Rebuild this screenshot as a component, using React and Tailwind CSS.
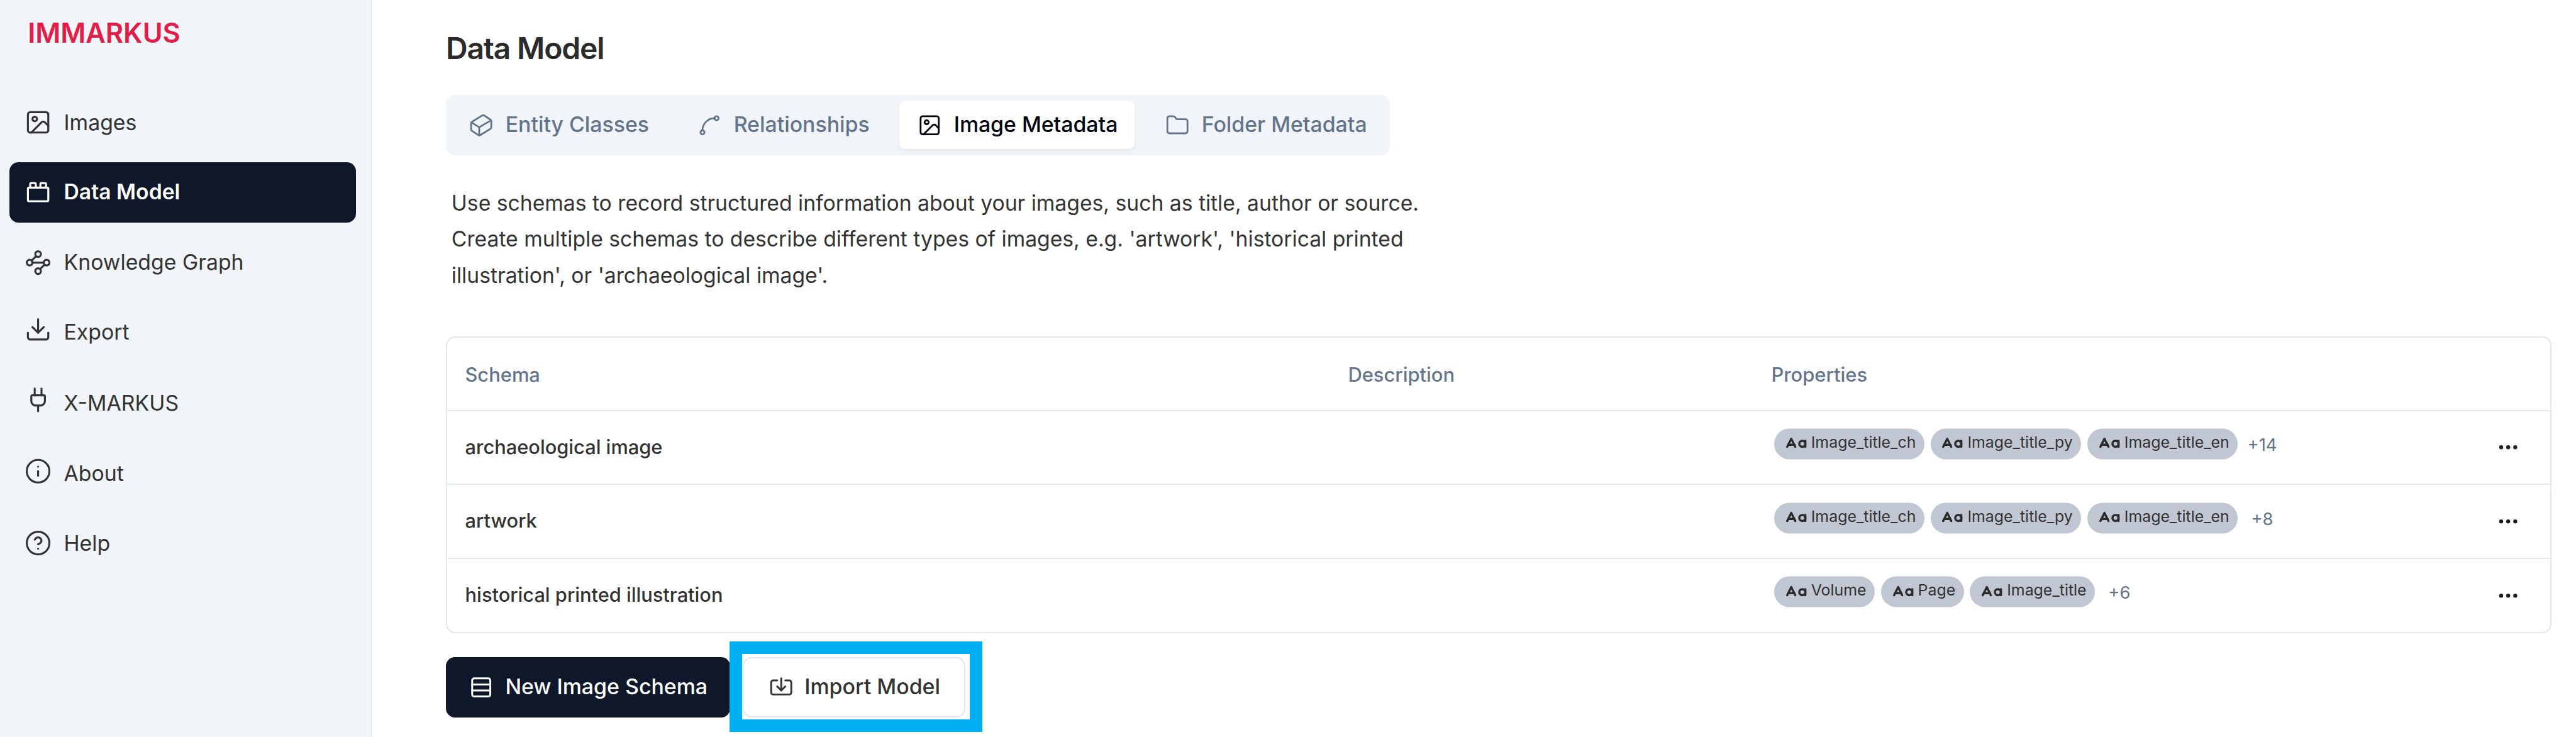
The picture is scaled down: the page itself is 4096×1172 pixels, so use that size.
import {
  Image,
  ToyBrick,
  Waypoints,
  Download,
  Plug,
  Info,
  CircleHelp,
  Cuboid,
  Spline,
  Folder,
  Rows3,
  Import,
  Ellipsis,
} from "lucide-react";

const NAV = [
  { label: "Images", icon: Image, iconShift: "", textShift: "translate-y-[1.4px]" },
  { label: "Data Model", icon: ToyBrick, iconShift: "", textShift: "-translate-y-[1.2px]", active: true },
  { label: "Knowledge Graph", icon: Waypoints, iconShift: "", textShift: "-translate-y-[0.5px]" },
  { label: "Export", icon: Download, iconShift: "-translate-y-[4.9px]", textShift: "-translate-y-[0.6px]" },
  { label: "X-MARKUS", icon: Plug, iconShift: "-translate-y-[4.7px]", textShift: "translate-y-[1px]" },
  { label: "About", icon: Info, iconShift: "-translate-y-[2.3px]", textShift: "translate-y-[1.2px]" },
  { label: "Help", icon: CircleHelp, iconShift: "", textShift: "translate-y-[1.4px]" },
];

const TABS = [
  { label: "Entity Classes", icon: Cuboid, width: "w-[343px]" },
  { label: "Relationships", icon: Spline, width: "w-[330px]" },
  { label: "Image Metadata", icon: Image, width: "w-[374px]", active: true },
  { label: "Folder Metadata", icon: Folder, width: "w-[377px]" },
];

const ROWS = [
  { name: "archaeological image", props: ["Image_title_ch", "Image_title_py", "Image_title_en"], more: "+14" },
  { name: "artwork", props: ["Image_title_ch", "Image_title_py", "Image_title_en"], more: "+8" },
  { name: "historical printed illustration", props: ["Volume", "Page", "Image_title"], more: "+6" },
];

const GRID = "grid grid-cols-[1404px_673px_1fr_auto] items-center";

function TextTypeIcon() {
  return (
    <svg
      viewBox="0 0 24 24"
      fill="none"
      stroke="currentColor"
      strokeWidth="2.2"
      strokeLinecap="round"
      strokeLinejoin="round"
      className="size-[38.4px] shrink-0 text-[#2b2b2b]"
    >
      <path d="m3 15 4-8 4 8" />
      <path d="M4 13h6" />
      <circle cx="18" cy="12" r="3" />
      <path d="M21 9v6" />
    </svg>
  );
}

function Chip({ label }) {
  return (
    <span className="flex h-[49px] items-center gap-[4.6px] rounded-full bg-[#c1c7d2] pr-[13.7px] pl-[15.7px] text-[24.9px] leading-[49px] text-[#333333]">
      <TextTypeIcon />
      <span className="-translate-y-[2.4px]">{label}</span>
    </span>
  );
}

function Sidebar() {
  return (
    <aside className="h-full w-[592px] shrink-0 border-r-2 border-[#e2e8f0] bg-[#f1f5f9] pt-[22px] pr-[24px] pl-[15.3px]">
      <div className="pl-[28.9px] text-[43.4px] leading-[60px] font-semibold text-[#e11d48]">IMMARKUS</div>
      <nav className="mt-[64.5px] flex flex-col gap-[15.5px]">
        {NAV.map(({ label, icon: Icon, iconShift, textShift, active }) => (
          <a
            key={label}
            className={
              active
                ? "flex h-[96px] items-center rounded-[14.4px] bg-[#0f172a] pl-[24px] text-[33.7px] font-semibold text-white"
                : "flex h-[96px] items-center pl-[24px] text-[33.8px] text-[#333333]"
            }
          >
            <Icon strokeWidth={1.75} className={"size-[43.2px] shrink-0 " + iconShift} />
            <span className={"pl-[19px] " + textShift}>{label}</span>
          </a>
        ))}
      </nav>
    </aside>
  );
}

function Tabs() {
  return (
    <div className="mt-[44.6px] flex h-[96px] w-[1501.4px] items-center gap-[20px] rounded-[14.4px] bg-[#f1f5f9] pl-[8px]">
      {TABS.map(({ label, icon: Icon, width, active }) => (
        <button
          key={label}
          className={
            "flex h-[77px] shrink-0 items-center rounded-[9.6px] pl-[28.5px] text-[33.8px] font-medium whitespace-nowrap " +
            width +
            (active ? " bg-white text-[#01040f] shadow-[0_2.4px_4.8px_rgba(0,0,0,0.05)]" : " text-[#64748b]")
          }
        >
          <Icon strokeWidth={1.75} className="size-[38.4px] shrink-0" />
          <span className="translate-y-[0.3px] pl-[19.8px]">{label}</span>
        </button>
      ))}
    </div>
  );
}

function SchemaTable() {
  return (
    <div className="mt-[68.8px] rounded-[14.4px] border-2 border-[#e2e8f0] text-[31px] font-medium">
      <div className={GRID + " h-[114.4px] text-[30.9px] text-[#64748b]"}>
        <span className="translate-y-[0.5px] pl-[28.4px]">Schema</span>
        <span className="translate-y-[0.5px] pl-[28.4px]">Description</span>
        <span className="translate-y-[0.5px] pl-[28.4px]">Properties</span>
      </div>
      {ROWS.map(({ name, props, more }) => (
        <div key={name} className={GRID + " h-[117.6px] border-t-2 border-[#e2e8f0] text-[#333333]"}>
          <span className="-translate-y-[1px] pl-[28.6px] text-[30.8px]">{name}</span>
          <span />
          <div className="flex -translate-y-[5.5px] items-center gap-[9.6px] pl-[33px] font-normal">
            {props.map((p) => (
              <Chip key={p} label={p} />
            ))}
            <span className="-ml-[1px] w-[60px] translate-y-[1.8px] text-center text-[27.5px] leading-[49px] text-[#64748b]">
              {more}
            </span>
          </div>
          <span className="pr-[47px]">
            <Ellipsis className="size-[38.4px] text-[#1f1f1f]" />
          </span>
        </div>
      ))}
    </div>
  );
}

function Actions() {
  return (
    <div className="mt-[38.8px] flex h-[96px] gap-[20px] text-[33.9px] font-medium whitespace-nowrap">
      <button className="flex w-[452px] items-center rounded-[14.4px] bg-[#0f172a] pl-[37px] text-white">
        <Rows3 strokeWidth={1.85} className="size-[38.4px] shrink-0" />
        <span className="-translate-y-[1.2px] pl-[19px]">New Image Schema</span>
      </button>
      <div className="relative">
        <button className="flex h-full w-[354px] items-center rounded-[14.4px] border-2 border-[#e2e8f0] bg-white pl-[39.7px] text-[#333333]">
          <Import strokeWidth={1.85} className="size-[38.4px] shrink-0" />
          <span className="-translate-y-[1.2px] pl-[18.2px]">Import Model</span>
        </button>
        <div className="pointer-events-none absolute -top-[25px] -left-[21px] h-[143.5px] w-[402px] border-[20px] border-[#00b0f0]" />
      </div>
    </div>
  );
}

export default function App() {
  return (
    <div className="flex h-[1172px] w-[4096px] overflow-hidden bg-white font-[Inter,sans-serif]">
      <Sidebar />
      <main className="flex-1 pt-[46.2px] pr-[39.5px] pl-[117px]">
        <h1 className="translate-y-[0.5px] text-[48px] leading-[60px] font-semibold tracking-[-0.025em] text-[#2b2b2b]">
          Data Model
        </h1>
        <Tabs />
        <p className="mt-[46.8px] pl-[8.8px] text-[33.68px] leading-[57.7px] text-[#333333]">
          Use schemas to record structured information about your images, such as title, author or source.
          <br />
          Create multiple schemas to describe different types of images, e.g. 'artwork', 'historical printed
          <br />
          illustration', or 'archaeological image'.
        </p>
        <SchemaTable />
        <Actions />
      </main>
    </div>
  );
}
